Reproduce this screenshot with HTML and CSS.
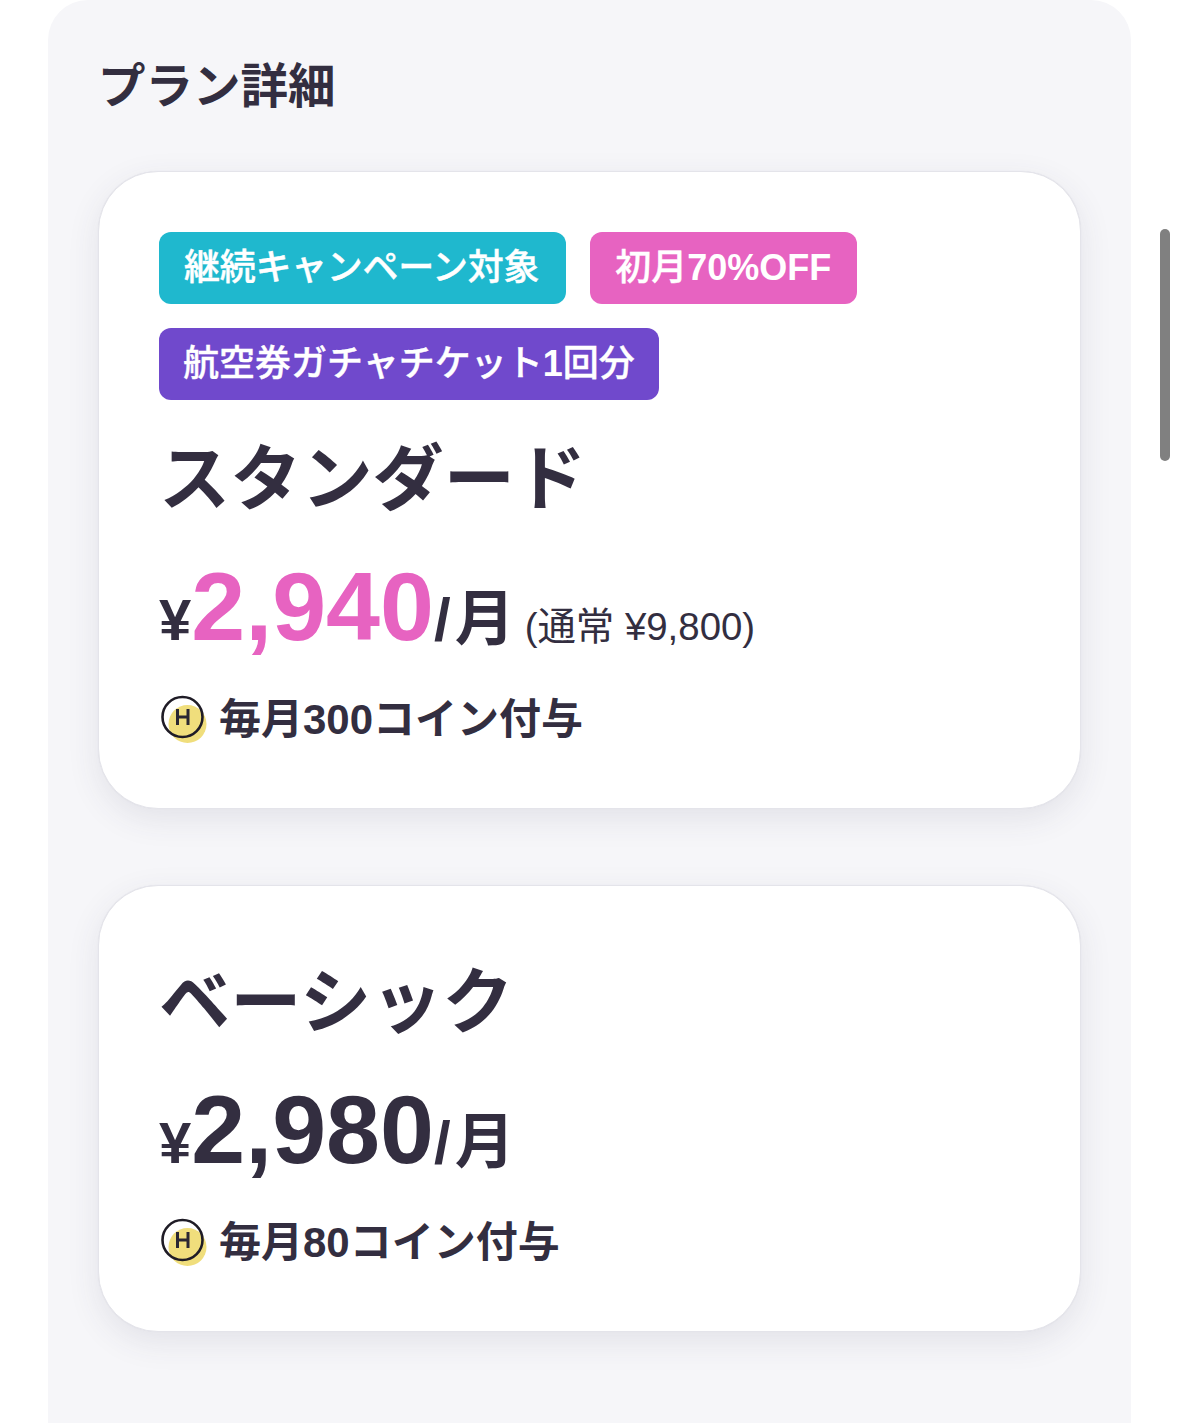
FILE: index.html
```html
<!DOCTYPE html>
<html lang="ja">
<head>
<meta charset="utf-8">
<title>プラン詳細</title>
<link rel="stylesheet" href="styles.css">
</head>
<body>
<main class="panel">
  <h2 class="panel-title">プラン詳細</h2>
  <section class="card card-first">
    <div class="tags">
      <span class="tag tag-teal">継続キャンペーン対象</span>
      <span class="tag tag-pink">初月<b class="latin">70%OFF</b></span>
      <span class="tag tag-purple">航空券ガチャチケット<b class="latin">1</b>回分</span>
    </div>
    <h3 class="plan-name">スタンダード</h3>
    <p class="price"><span class="yen">¥</span><span class="amount amount-pink">2,940</span><span class="unit">/月</span><span class="regular">(通常 ¥9,800)</span></p>
    <p class="coins">
      <svg class="coin" viewBox="0 0 48 49" aria-hidden="true"><circle cx="26.5" cy="29" r="19" fill="#f0de7c"/><circle cx="21.5" cy="22" r="20" fill="none" stroke="#1f1c26" stroke-width="2.6"/><path d="M16.5 14v16M27 14v16M16.5 22h10.5" fill="none" stroke="#2a2733" stroke-width="3"/></svg>
      <span>毎月300コイン付与</span>
    </p>
  </section>
  <section class="card">
    <h3 class="plan-name">ベーシック</h3>
    <p class="price"><span class="yen">¥</span><span class="amount">2,980</span><span class="unit">/月</span></p>
    <p class="coins">
      <svg class="coin" viewBox="0 0 48 49" aria-hidden="true"><circle cx="26.5" cy="29" r="19" fill="#f0de7c"/><circle cx="21.5" cy="22" r="20" fill="none" stroke="#1f1c26" stroke-width="2.6"/><path d="M16.5 14v16M27 14v16M16.5 22h10.5" fill="none" stroke="#2a2733" stroke-width="3"/></svg>
      <span>毎月80コイン付与</span>
    </p>
  </section>
</main>
<div class="scrollbar"></div>
</body>
</html>
```
FILE: styles.css
```css
* { box-sizing: border-box; }
html, body { margin: 0; height: 100%; overflow: hidden; background: #fff; }
body {
  font-family: "Liberation Sans", "Noto Sans CJK JP", sans-serif;
  color: #332e40;
  padding: 0 48px;
  position: relative;
}
.panel {
  background: #f6f6f9;
  border-radius: 40px 40px 0 0;
  padding: 57px 50px 0;
  min-height: 1500px;
}
.panel-title {
  margin: 0 0 55px;
  font-size: 47.5px;
  line-height: 59px;
  font-weight: 700;
}
.card {
  background: #fff;
  border: 1px solid #e4e4ea;
  border-radius: 60px;
  padding: 60px 60px 57px;
  box-shadow: 0 0 1px #dedee5, 0 10px 32px rgba(60, 60, 90, 0.1);
}
.card-first { margin-bottom: 76px; }
.tags { display: flex; flex-wrap: wrap; gap: 24px; margin-bottom: 23px; }
.tag {
  height: 72px;
  padding: 0 24px;
  border-radius: 12px;
  color: #fff;
  font-size: 36px;
  font-weight: 500;
  -webkit-text-stroke: 0.4px #fff;
  line-height: 71px;
}
.latin { font-weight: 700; -webkit-text-stroke: 0; }
.tag-teal { background: #1fb8ce; padding: 0 27px 0 25px; letter-spacing: -0.3px; }
.tag-pink { background: #e763c1; padding: 0 26px 0 25px; }
.tag-purple { background: #7049cc; }
.plan-name {
  margin: 0 0 16px;
  font-size: 71.2px;
  line-height: 114px;
  font-weight: 700;
}
.price {
  margin: 0;
  display: flex;
  align-items: baseline;
  height: 108px;
  font-weight: 700;
  line-height: 108px;
}
.yen { font-size: 58px; }
.amount { font-size: 97px; }
.amount-pink { color: #e763c1; }
.unit { font-size: 60px; letter-spacing: 4px; }
.regular { font-size: 38.4px; font-weight: 400; margin-left: 6px; letter-spacing: 0; }
.coins {
  margin: 18px 0 0;
  display: flex;
  align-items: center;
  gap: 10px;
  height: 72px;
  font-size: 42px;
  font-weight: 700;
}
.coin { width: 48px; height: 49px; flex: none; margin-left: 2px; margin-top: 8px; }
.scrollbar {
  position: absolute;
  left: 1160px;
  top: 229px;
  width: 10px;
  height: 232px;
  border-radius: 5px;
  background: #808080;
}
```
